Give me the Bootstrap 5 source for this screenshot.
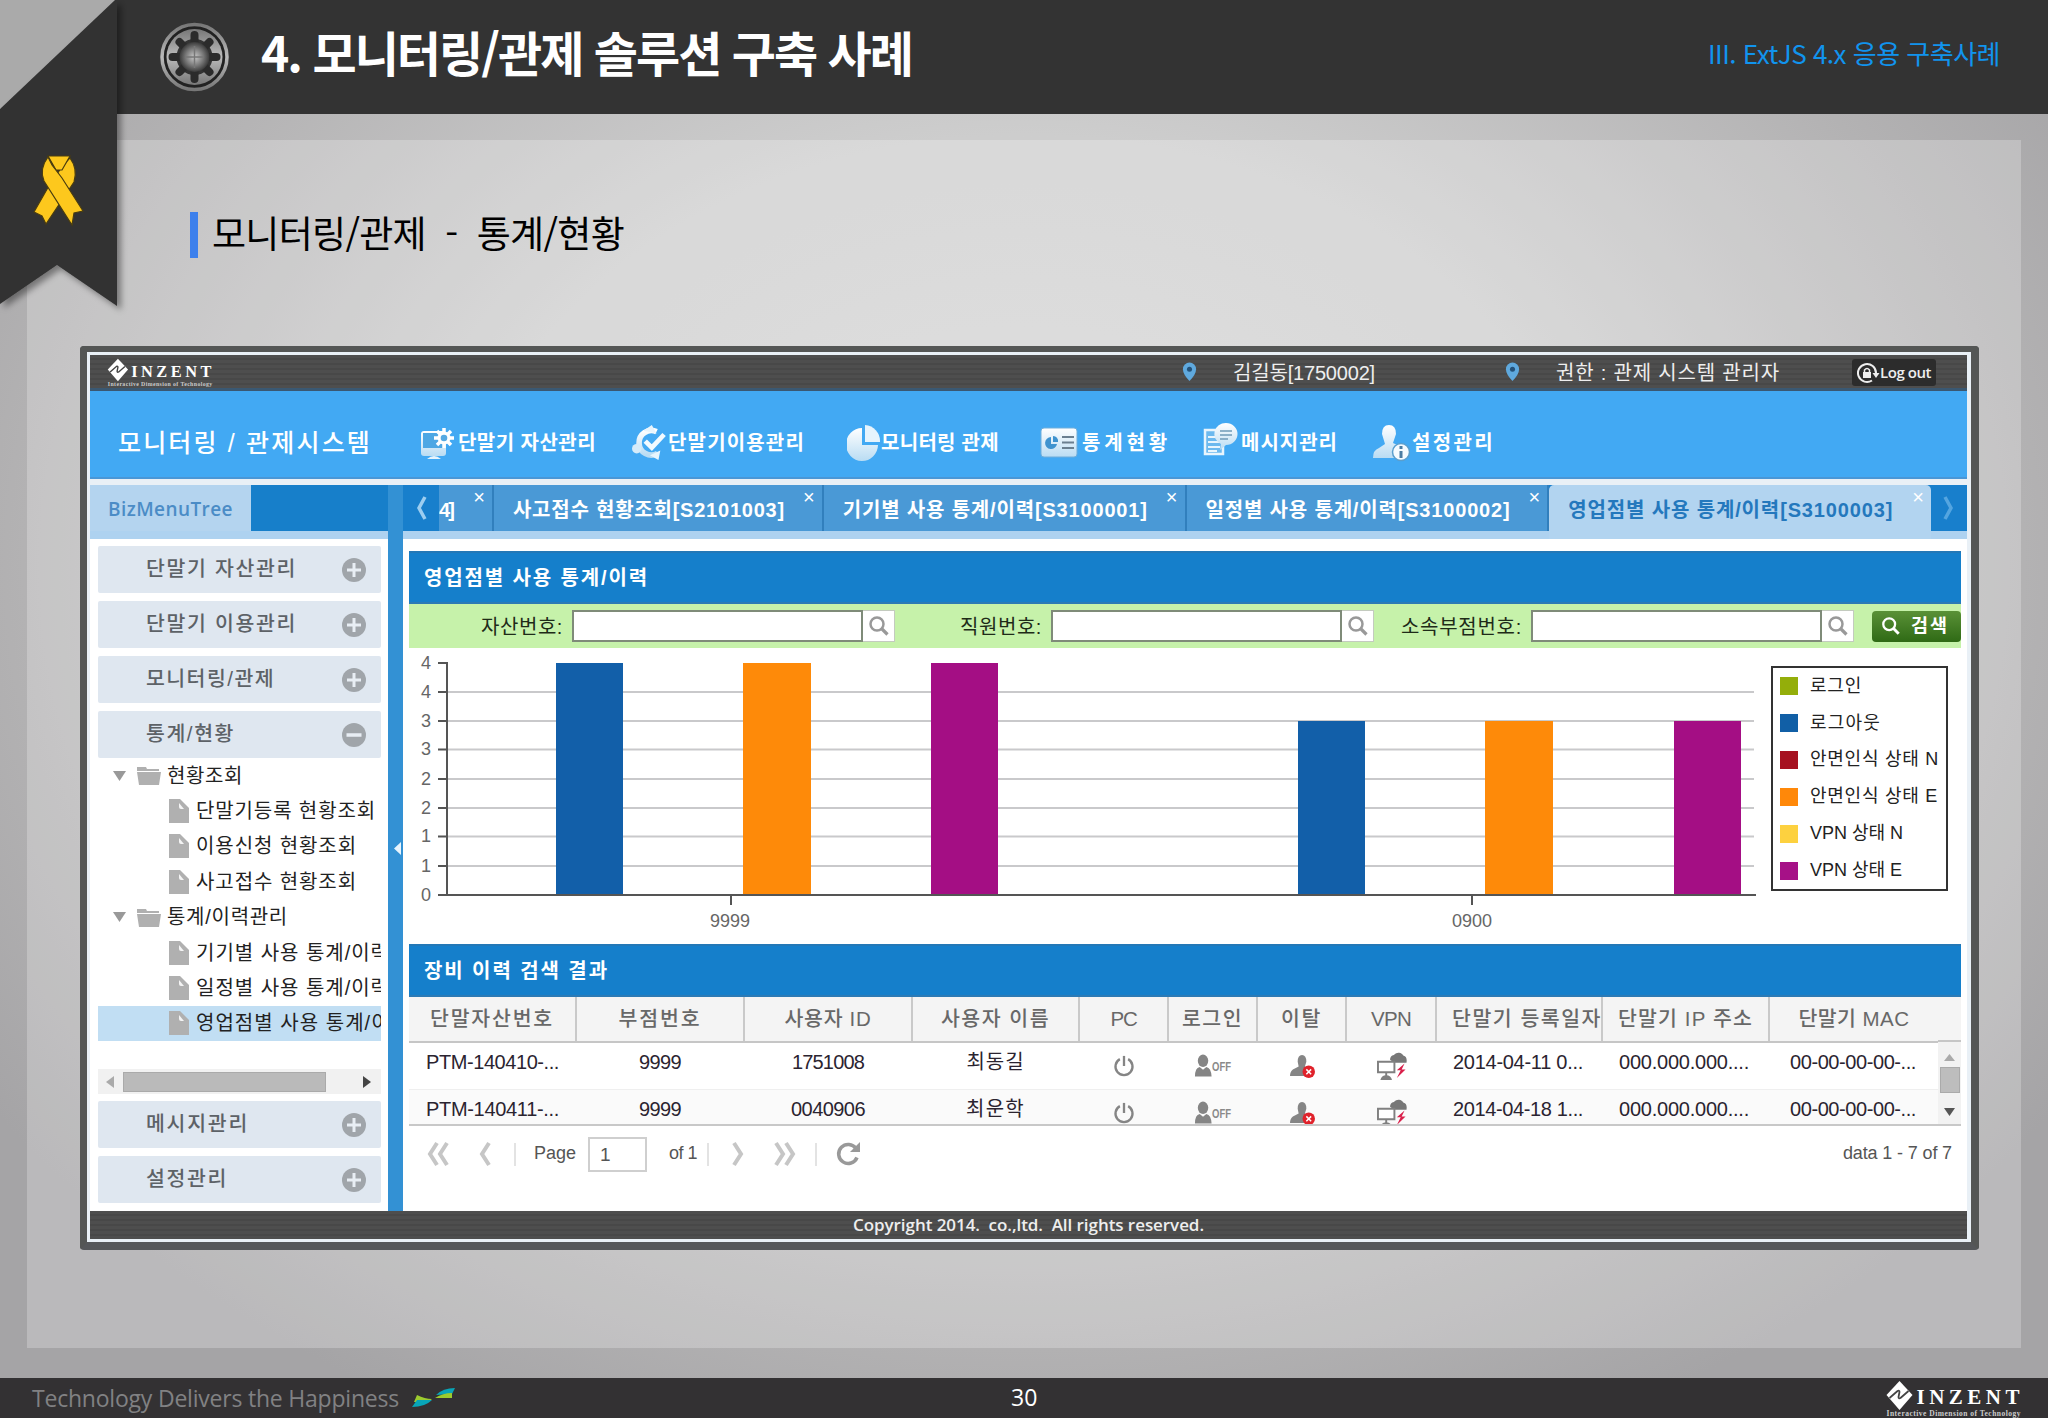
<!DOCTYPE html>
<html lang="ko">
<head>
<meta charset="utf-8">
<title>모니터링/관제 솔루션 구축 사례</title>
<link href="https://cdn.jsdelivr.net/npm/bootstrap@5.3.0/dist/css/bootstrap.min.css" rel="stylesheet">
<script src="https://cdn.jsdelivr.net/npm/bootstrap@5.3.0/dist/js/bootstrap.bundle.min.js"></script>
<style>
  body{width:2048px;height:1418px;overflow:hidden;font-family:"Liberation Sans","Noto Sans CJK KR",sans-serif;font-size:20px;line-height:1.2;color:#222;
    background:radial-gradient(ellipse 1250px 960px at 50% 40%,#d6d6d6 0%,#cdcdcd 45%,#b3b2b3 80%,#a5a4a6 100%)}
  svg{flex:none;display:block}
  [data-w]{white-space:nowrap;display:inline-block;flex:none}
  .slide-head{height:114px;background:#333;padding-left:160px;padding-right:48px}
  .slide-title{font:700 48px/60px "Noto Sans CJK KR",sans-serif;color:#fff;margin:-13px 0 0 32px}
  .slide-section{font:400 26px/40px "Noto Sans CJK KR",sans-serif;color:#1194ee;margin-top:-8px}
  .slide-body{height:1264px;padding:26px 27px 30px}
  .slide-panel{height:1208px;background:rgba(255,255,255,.24);padding:72px 43px 0 53px}
  .slide-sub{height:46px;margin-left:110px;margin-bottom:88px;border-left:8px solid #3d80ec;padding-left:14px;font:400 37px/40px "Noto Sans CJK KR",sans-serif;color:#000}
  .slide-foot{height:40px;background:#333133;color:#818183;padding-left:32px;padding-right:26px;font:23px/40px "Open Sans","Noto Sans",sans-serif}
  .page-no{color:#fff;font-size:23px;left:1011px;top:-1px}
  .wing{margin-left:13px}
  .ribbon{left:0;top:0;z-index:5}
  .brand-name{font:700 21px/22px "Liberation Serif",serif;fill:#fff}
  .app{width:1899px;height:904px;border:solid #545655;border-width:6px 8px 8px 7px;border-bottom-color:#55575a;border-radius:4px;background:#e9f0f6;padding:3px 4px 3px 3px}
  .app-top{height:36px;background:repeating-linear-gradient(#4e4e4e 0 3px,#484848 3px 5px);border-bottom:3px solid #3a5872;color:#eee;padding:3px 0 0 17px}
  .pin-user{margin:-4px 36px 0 969px}
  .pin-role{margin:-4px 36px 0 130px}
  .logout{width:84px;height:27px;background:#2c2c2c;border-radius:3px;padding-left:4px;margin:0 0 1px 72px;font:600 15px/27px "Open Sans",sans-serif}
  .app-nav{height:88px;background:#42a9f3;border-bottom:2px solid #4a97d6;color:#fff;font-weight:700;padding:17px 0 0 28px;font-size:20px}
  .app-nav .sys{font-size:25px;font-weight:500}
  .nav-cell{height:50px}
  .nav-cell span{margin-left:2px}
  .nc-asset{margin-left:47px}.nc-use{margin-left:36px}.nc-mon{margin-left:42px}.nc-stat{margin-left:41px}.nc-msg{margin-left:32px}.nc-set{margin-left:34px}
  .nc-asset span{margin-left:3px}.nc-mon span{margin-left:0}.nc-stat span{margin-left:4px}
  .nc-msg svg{margin-top:-8px}
  .app-main{height:726px;background:#fff;margin-top:6px}
  .side{width:298px}
  .side-head{height:46px;background:#177fca}
  .side-tab{width:161px;height:54px;background:#b4d4ef;color:#4b8cc6;padding-left:18px;font:600 19px/49px "Open Sans",sans-serif}
  .strip{height:8px;background:#aed2f0}
  .menu{padding:7px 7px 0 8px}
  .menu-item{height:47px;margin-bottom:8px;background:#dfe7f0;color:#5d6267;font-weight:500;font-size:20.500px;padding:0 15px 0 48px;border-radius:2px}
  .tree{height:283px}
  .tree-row{height:35.400px;overflow:hidden;padding-left:15px;color:#222}
  .tree-row.leaf{padding-left:71px}
  .tree-row.active{background:#c1def3}
  .tree-row .fold{margin:0 6px 0 11px}
  .tree-row .doc{margin-right:7px}
  .hscroll{height:25px;background:#f1f1f1;margin:28px 0 7px;padding:0 10px 0 8px}
  .hthumb{width:203px;height:20px;background:#bababa;border:1px solid #aaa;margin-left:9px}
  .splitter{width:15px;background:#3391d4}
  .splitter svg{margin-right:1px}
  .work{width:1564px}
  .tabs{height:46px;background:#187fcc;color:#fff}
  .tab-nav{width:36px}
  .app-tab{height:46px;background:#4a99d6;border-right:2px solid #317fbd;padding:4px 0 0 19px;font-weight:600;font-size:20px;overflow:hidden}
  .app-tab.active{height:54px;background:#b2d4f0;color:#2478bd;border-right:0;border-radius:5px 5px 0 0;padding-bottom:8px;padding-left:19px}
  .app-tab.cut{width:55px;padding-left:0}
  .tw-330{width:330px}.tw-363{width:363px}.tw-382{width:382px}
  .tab-x{font:20px/20px "Liberation Sans";margin:-27px 7px 0 auto;color:#fff}
  .pane{margin:12px 6px 0 6px;width:1552px}
  .pane-head{height:53px;background:#157fcb;border-top:2px solid #2378b7;border-bottom:2px solid #2c7ab5;color:#fff;font-weight:600;font-size:20px;padding-left:15px}
  .search{height:44px;background:#c6f2aa}
  .lbl{color:#1e2b18;padding-top:2px}
  .l-asset{margin-left:72px}.l-emp{margin-left:65px}.l-dept{margin-left:27px}
  .fld{height:32px;width:291px;border:2px solid #7f8b79;background:#fff;margin-left:9px}
  .trig{width:32px;height:32px;background:#fff;border:1px solid #c4cbbf;border-left:0;color:#999}
  .btn-find{height:31px;width:89px;border-radius:4px;background:linear-gradient(#5a9137,#2f6a15);color:#fff;font-weight:700;font-size:18.500px;padding:0 12px 0 9px;border:0}
  .chart-box{height:296px}
  .chart-box text{font:18px "Liberation Sans",sans-serif;fill:#666}
  .legend-box{width:177px;height:225px;border:2px solid #333;margin:18px 0 0 10px;padding-left:7px;font-size:18px}
  .legend-row{height:36.900px}
  .swatch{width:18px;height:18px;margin-right:12px}
  .c-in{background:#94ae0a}.c-out{background:#115fa6}.c-fn{background:#a61120}.c-fe{background:#ff8809}.c-vn{background:#fdd13f}.c-ve{background:#a61187}
  .grid{height:127px;width:1529px;overflow:hidden}
  .grid table{table-layout:fixed;width:1529px;margin:0}
  .w-a{width:167px}.w-b{width:168px}.w-i{width:89px}.w-v{width:90px}.w-d{width:166px}.w-m{width:169px}
  .grid th{height:45px;padding:0;text-align:center;vertical-align:middle;font-weight:500;font-size:20.500px;color:#686868;background:#f4f4f4;border-right:2px solid #c9c9c9;border-bottom:2px solid #c6c6c6;overflow:hidden;white-space:nowrap}
  .grid th:last-child{border-right:0}
  .grid th.lead-col{text-align:left;padding-left:15px}
  .grid td{height:47.500px;padding:7px 0 0;text-align:center;vertical-align:top;border:0;border-bottom:1px solid #efefef;white-space:nowrap;color:#2b2430;line-height:24px}
  .grid tr:last-child td{background:#fafafa}
  .grid td.txt{text-align:left;padding-left:17px}
  .grid td.txt.mac{padding-left:21px}
  .grid td.ico{padding-top:11px;padding-left:1px}
  .grid td svg{margin:auto}
  .grid td svg.up{margin-top:-2px}
  .off{font:700 12px "Liberation Sans";fill:#8a8a8a}
  .vs-head{height:45px;width:23px;background:#f4f4f4;border-bottom:2px solid #c6c6c6}
  .vscroll{height:82px;width:23px;background:#f2f2f2}
  .vthumb{width:20px;height:26px;background:#bdbdbd;border:1px solid #aaa;margin-top:5px}
  .grid-wrap{border-bottom:2px solid #c8c8c8}
  .pager{height:58px;padding:0 9px 2px 17px;color:#555;font-size:18px}
  .pager-sep{width:2px;height:23px;background:#e3e3e3}
  .g-10{margin-left:10px}.g-12{margin-left:12px}.g-18{margin-left:18px}.g-22{margin-left:22px}.g-28{margin-left:28px}
  .pg-input{width:59px;height:35px;border:2px solid #cfcfcf;padding:5px 0 0 10px;font-size:19px}
  .app-foot{height:28px;background:repeating-linear-gradient(#4e4e4e 0 3px,#484848 3px 5px);color:#eee;font:600 17px/28px "Open Sans",sans-serif}
</style>
</head>
<body class="position-relative">

<svg width="0" height="0" class="position-absolute">
  <defs>
    <linearGradient id="ice" x1="0" y1="0" x2="0" y2="1"><stop offset="0" stop-color="#fff"/><stop offset="1" stop-color="#b9dcf3"/></linearGradient>
    <linearGradient id="metal" x1="0" y1="0" x2="0" y2="1"><stop offset="0" stop-color="#777"/><stop offset=".5" stop-color="#bbb"/><stop offset="1" stop-color="#777"/></linearGradient>
    <radialGradient id="hub"><stop offset="0" stop-color="#ccc"/><stop offset=".6" stop-color="#777"/><stop offset="1" stop-color="#3a3a3a"/></radialGradient>
    <symbol id="plus" viewBox="0 0 24 24"><circle cx="12" cy="12" r="12" fill="#a0a5aa"/><path d="M12 5v14M5 12h14" stroke="#e8eef4" stroke-width="3"/></symbol>
    <symbol id="minus" viewBox="0 0 24 24"><circle cx="12" cy="12" r="12" fill="#a0a5aa"/><path d="M4.500 12h15" stroke="#e8eef4" stroke-width="3.500"/></symbol>
    <symbol id="down" viewBox="0 0 13 10"><path d="M0 0h13L6.500 10z" fill="#999"/></symbol>
    <symbol id="folder" viewBox="0 0 24 19"><path d="M0 1h9l1 2h12v2H0zM0 6h24l-2 13H2z" fill="#b0b0b0"/></symbol>
    <symbol id="file" viewBox="0 0 20 24"><path d="M0 0h11l9 9v15H0z" fill="#b0b0b0"/><path d="M10 4l5 6h-3q-2 0-2-2z" fill="#f4f4f4"/></symbol>
    <symbol id="mag" viewBox="0 0 22 22"><circle cx="9" cy="9" r="6.500" fill="none" stroke="currentColor" stroke-width="2.500"/><path d="M13.500 13.500l6 6" stroke="currentColor" stroke-width="3.200"/></symbol>
    <symbol id="power" viewBox="0 0 24 24"><path d="M7.500 4.500a9.300 9.300 0 1 0 9 0" fill="none" stroke="#858585" stroke-width="2.500"/><path d="M12 1v11" stroke="#858585" stroke-width="2.500"/></symbol>
    <symbol id="person" viewBox="0 0 20 24"><ellipse cx="9.500" cy="6.500" rx="5.500" ry="6.500" fill="#858585"/><path d="M1 23q0-9 5-10l3.500 3 3.500-3q5 1 5.500 10z" fill="#858585"/></symbol>
    <symbol id="away" viewBox="0 0 28 26"><path d="M9 8q0-7 4.500-7T18 8l-1.500 5q7 2 7 10H1q0-5 3-7l6-3z" fill="#858585"/><circle cx="20.500" cy="18.500" r="6.500" fill="#e0222b"/><path d="M18 16l5 5m0-5l-5 5" stroke="#fff" stroke-width="1.500"/></symbol>
    <symbol id="vpn" viewBox="0 0 32 30"><path d="M14 8a5 5 0 0 1 4-5 6 6 0 0 1 10 1q4 1 3 7H18z" fill="#777"/><path d="M1.500 10h17v11h-17z" fill="#fff" stroke="#808080" stroke-width="2"/><path d="M10 21v4" stroke="#808080" stroke-width="2"/><path d="M4 29q1-5 6-5t6 5z" fill="#808080"/><path d="M29 12l-8 7h4l-4 8 9-9h-4z" fill="#d91f4a"/></symbol>
    <symbol id="pin" viewBox="0 0 16 20"><path d="M8 20Q1 13 1 7.500a7 7 0 0 1 14 0Q15 13 8 20z" fill="#5fa9de"/><circle cx="8" cy="7.500" r="2.700" fill="#24527a"/></symbol>
    <symbol id="inzent" viewBox="0 0 136 38">
      <path d="M14 0l13 14-13 15L1 14z" fill="#fff"/><path d="M4 17l8-7q2-1 2 1l-1 5q0 2 2 1l8-7" fill="none" stroke="#444" stroke-width="1.800"/>
      <text class="brand-name" x="31" y="23" textLength="103" lengthAdjust="spacing">INZENT</text>
      <text x="1" y="34.500" textLength="134" font-family="Liberation Serif" font-weight="700" font-size="7.500" fill="#ccc">Interactive Dimension of Technology</text>
    </symbol>
  </defs>
</svg>

<!-- Corner ribbon lies over the header and the panel -->
<svg class="ribbon position-absolute" width="128" height="318" viewBox="0 0 128 318">
  <defs><filter id="sh" x="-10%" y="-5%" width="130%" height="115%"><feDropShadow dx="4" dy="4" stdDeviation="3" flood-opacity=".4"/></filter></defs>
  <path d="M0 0h117v110H0z" fill="#aaa"/>
  <path d="M115 0h2v306L57 265 0 304V109z" fill="#333" filter="url(#sh)"/>
  <g fill="#fdc81d" stroke="#4a3d10" stroke-width="1.200">
    <path d="M70 158q8 11 4 24L46 224l-4-8-8-4 16-28 14-20z"/>
    <path d="M48 156h22l-8 14h-6z"/>
    <path d="M48 157q-9 12-4 24l28 44 2-12 9-2-21-33-10-13z"/>
  </g>
</svg>

<header class="slide-head d-flex align-items-center">
  <svg width="69" height="70" viewBox="0 0 69 70">
    <circle cx="34.500" cy="35" r="32.500" fill="#222" stroke="url(#metal)" stroke-width="3.500"/>
    <circle cx="34.500" cy="35" r="28" fill="url(#metal)"/>
    <circle cx="34.500" cy="35" r="18" fill="#333"/>
    <g stroke="#2b2b2b" stroke-width="8" stroke-linecap="round"><path d="M34.500 13v44M12.500 35h44M19.500 20l30 30M49.500 20l-30 30"/></g>
    <circle cx="34.500" cy="35" r="15" fill="url(#hub)"/>
    <path d="M34.500 24v22M25 35h19" stroke="#777" stroke-width="1.500"/>
  </svg>
  <span class="slide-title" data-w="651">4. 모니터링/관제 솔루션 구축 사례</span>
  <span class="slide-section ms-auto" data-w="292">III. ExtJS 4.x 응용 구축사례</span>
</header>

<main class="slide-body">
  <div class="slide-panel">
    <h2 class="slide-sub"><span data-w="412">모니터링/관제&nbsp; - &nbsp;통계/현황</span></h2>

    <section class="app">
      <div class="app-top d-flex align-items-center">
        <svg width="106" height="31"><use href="#inzent"/></svg>
        <svg class="pin-user" width="15" height="19"><use href="#pin"/></svg>
        <span data-w="142">김길동[1750002]</span>
        <svg class="pin-role" width="15" height="19"><use href="#pin"/></svg>
        <span data-w="224">권한 : 관제 시스템 관리자</span>
        <div class="logout d-flex align-items-center">
          <svg width="24" height="22" viewBox="0 0 24 22"><path d="M16 18.500A9 9 0 1 1 20 11" fill="none" stroke="#eee" stroke-width="2"/><path d="M16.500 11h7l-3.500 5z" fill="#eee"/><path d="M7 10h8v6H7z" fill="#eee"/><path d="M8.500 10V8q2.500-3 5 0v2" fill="none" stroke="#eee" stroke-width="1.500"/></svg>
          <span data-w="51">Log out</span>
        </div>
      </div>

      <nav class="app-nav d-flex align-items-center">
        <span class="sys" data-w="254">모니터링 / 관제시스템</span>
        <div class="nav-cell nc-asset d-flex align-items-center">
          <svg width="36" height="36" viewBox="0 0 36 36"><rect x="2" y="6" width="25" height="25" rx="3" fill="url(#ice)"/><path d="M4 8h21v15H4z" fill="#4da7e4"/><path d="M8 34q7-6 14 0z" fill="#e6f4fd"/><g stroke="#fff" stroke-width="3.500"><path d="M25 3v20M15 13h20M18 6l14 14M32 6L18 20"/></g><circle cx="25" cy="13" r="6.500" fill="#fff"/><circle cx="25" cy="13" r="3.300" fill="#55a9e2"/></svg>
          <span data-w="138">단말기 자산관리</span>
        </div>
        <div class="nav-cell nc-use d-flex align-items-center">
          <svg width="34" height="38" viewBox="0 0 36 38"><path d="M26 7A13 13 0 1 0 27 30" fill="none" stroke="url(#ice)" stroke-width="6"/><path d="M12 6l9-6 5 9zM30 27l-2 10-9-5z" fill="#e8f5fd"/><circle cx="5" cy="25" r="5" fill="#d5ebf9"/><path d="M14 17l7 7L34 10" fill="none" stroke="#f2faff" stroke-width="5"/></svg>
          <span data-w="137">단말기이용관리</span>
        </div>
        <div class="nav-cell nc-mon d-flex align-items-center">
          <svg width="34" height="38" viewBox="0 0 34 38"><path d="M15 4a16 16.500 0 1 0 16 17H15z" fill="url(#ice)"/><path d="M18 1a16 16 0 0 1 15 17H18z" fill="#e6f4fd"/></svg>
          <span data-w="118">모니터링 관제</span>
        </div>
        <div class="nav-cell nc-stat d-flex align-items-center">
          <svg width="38" height="32" viewBox="0 0 38 32"><rect x="1" y="1" width="36" height="29" rx="3" fill="url(#ice)" stroke="#6faedb"/><path d="M11 10a6 6 0 1 0 6 7h-6z" fill="#3f93cf"/><path d="M13 9v6h5a5 5 0 0 0-5-6z" fill="#3f93cf"/><path d="M22 10h12M22 15.500h12M22 21h12" stroke="#6a7f90" stroke-width="2"/></svg>
          <span data-w="89">통계현황</span>
        </div>
        <div class="nav-cell nc-msg d-flex align-items-center">
          <svg width="36" height="38" viewBox="0 0 36 38"><path d="M2 10h18v24H2z" fill="#6cb9ee" stroke="#e8f5fd" stroke-width="2.500"/><path d="M5 17h9M5 22h12M5 27h12M5 31h9" stroke="#e8f5fd" stroke-width="2"/><path d="M23 3a11.500 11 0 0 1 0 22l-6 5 1-6A11.500 11 0 0 1 23 3z" fill="url(#ice)"/><path d="M17 11h12M17 15h12M17 19h8" stroke="#6f9ab8" stroke-width="1.500"/></svg>
          <span data-w="97">메시지관리</span>
        </div>
        <div class="nav-cell nc-set d-flex align-items-center">
          <svg width="38" height="38" viewBox="0 0 38 38"><path d="M10 10q0-9 7-9t7 9l-3 9q10 3 10 15H1q0-8 6-10l6-4z" fill="url(#ice)"/><circle cx="29" cy="28" r="8.500" fill="#f5fbff" stroke="#5a9fce" stroke-width="1.500"/><path d="M29 22v3M29 27v7" stroke="#4b7da3" stroke-width="3"/></svg>
          <span data-w="83">설정관리</span>
        </div>
      </nav>

      <div class="app-main d-flex">
        <aside class="side">
          <div class="side-head"><div class="side-tab"><span data-w="125">BizMenuTree</span></div></div>
          <div class="strip"></div>
          <div class="menu">
            <div class="menu-item d-flex align-items-center justify-content-between"><span data-w="151">단말기 자산관리</span><svg width="24" height="24"><use href="#plus"/></svg></div>
            <div class="menu-item d-flex align-items-center justify-content-between"><span data-w="151">단말기 이용관리</span><svg width="24" height="24"><use href="#plus"/></svg></div>
            <div class="menu-item d-flex align-items-center justify-content-between"><span data-w="129">모니터링/관제</span><svg width="24" height="24"><use href="#plus"/></svg></div>
            <div class="menu-item d-flex align-items-center justify-content-between mb-0"><span data-w="89">통계/현황</span><svg width="24" height="24"><use href="#minus"/></svg></div>
            <div class="tree">
              <div class="tree-row d-flex align-items-center"><svg width="13" height="10"><use href="#down"/></svg><svg class="fold" width="24" height="19"><use href="#folder"/></svg><span data-w="76">현황조회</span></div>
              <div class="tree-row leaf d-flex align-items-center"><svg width="20" height="24" class="doc"><use href="#file"/></svg><span data-w="180">단말기등록 현황조회</span></div>
              <div class="tree-row leaf d-flex align-items-center"><svg width="20" height="24" class="doc"><use href="#file"/></svg><span data-w="161">이용신청 현황조회</span></div>
              <div class="tree-row leaf d-flex align-items-center"><svg width="20" height="24" class="doc"><use href="#file"/></svg><span data-w="161">사고접수 현황조회</span></div>
              <div class="tree-row d-flex align-items-center"><svg width="13" height="10"><use href="#down"/></svg><svg class="fold" width="24" height="19"><use href="#folder"/></svg><span data-w="121">통계/이력관리</span></div>
              <div class="tree-row leaf d-flex align-items-center"><svg width="20" height="24" class="doc"><use href="#file"/></svg><span data-w="194">기기별 사용 통계/이력</span></div>
              <div class="tree-row leaf d-flex align-items-center"><svg width="20" height="24" class="doc"><use href="#file"/></svg><span data-w="194">일정별 사용 통계/이력</span></div>
              <div class="tree-row leaf active d-flex align-items-center"><svg width="20" height="24" class="doc"><use href="#file"/></svg><span data-w="214">영업점별 사용 통계/이력</span></div>
            </div>
            <div class="hscroll d-flex align-items-center">
              <svg width="8" height="12"><path d="M8 0v12L0 6z" fill="#aaa"/></svg>
              <div class="hthumb"></div>
              <svg width="8" height="12" class="ms-auto"><path d="M0 0v12l8-6z" fill="#444"/></svg>
            </div>
            <div class="menu-item d-flex align-items-center justify-content-between"><span data-w="103">메시지관리</span><svg width="24" height="24"><use href="#plus"/></svg></div>
            <div class="menu-item d-flex align-items-center justify-content-between"><span data-w="82">설정관리</span><svg width="24" height="24"><use href="#plus"/></svg></div>
          </div>
        </aside>

        <div class="splitter d-flex align-items-center justify-content-end"><svg width="9" height="13"><path d="M8 0v13L1 6.500z" fill="#e8f4fd"/></svg></div>

        <div class="work">
          <div class="tabs d-flex align-items-start">
            <div class="tab-nav d-flex align-items-center justify-content-center h-100"><svg width="12" height="28"><path d="M10 3L4 14l6 11" fill="none" stroke="#9ccdf0" stroke-width="3.500"/></svg></div>
            <div class="app-tab cut d-flex align-items-center"><span data-w="14">4]</span><span class="tab-x">×</span></div>
            <div class="app-tab tw-330 d-flex align-items-center"><span data-w="272">사고접수 현황조회[S2101003]</span><span class="tab-x">×</span></div>
            <div class="app-tab tw-363 d-flex align-items-center"><span data-w="305">기기별 사용 통계/이력[S3100001]</span><span class="tab-x">×</span></div>
            <div class="app-tab tw-363 d-flex align-items-center"><span data-w="305">일정별 사용 통계/이력[S3100002]</span><span class="tab-x">×</span></div>
            <div class="app-tab tw-382 active d-flex align-items-center"><span data-w="325">영업점별 사용 통계/이력[S3100003]</span><span class="tab-x">×</span></div>
            <div class="tab-nav d-flex align-items-center justify-content-center h-100"><svg width="12" height="28"><path d="M2 3l6 11-6 11" fill="none" stroke="#54a5e0" stroke-width="3.500"/></svg></div>
          </div>
          <div class="strip"></div>

          <div class="pane">
            <div class="pane-head d-flex align-items-center"><span data-w="225">영업점별 사용 통계/이력</span></div>
            <form class="search d-flex align-items-center">
              <span class="lbl l-asset" data-w="82">자산번호:</span><div class="fld"></div><div class="trig d-flex align-items-center justify-content-center"><svg width="22" height="22"><use href="#mag"/></svg></div>
              <span class="lbl l-emp" data-w="82">직원번호:</span><div class="fld"></div><div class="trig d-flex align-items-center justify-content-center"><svg width="22" height="22"><use href="#mag"/></svg></div>
              <span class="lbl l-dept" data-w="121">소속부점번호:</span><div class="fld"></div><div class="trig d-flex align-items-center justify-content-center"><svg width="22" height="22"><use href="#mag"/></svg></div>
              <button type="button" class="btn-find d-flex align-items-center justify-content-between ms-auto"><svg width="20" height="20"><use href="#mag"/></svg><span data-w="38">검색</span></button>
            </form>

            <div class="chart-box d-flex align-items-start">
              <svg width="1352" height="296" viewBox="409 648 1352 296">
                <path d="M447 692h1307M447 721h1307M447 749.500h1307M447 779h1307M447 808h1307M447 836.500h1307M447 866h1307" stroke="#c9c9cb" stroke-width="2"/>
                <g fill="#125fa9"><path d="M556 663h67v232h-67zM1298 721h67v174h-67z"/></g>
                <g fill="#fe8a09"><path d="M743 663h68v232h-68zM1485 721h68v174h-68z"/></g>
                <g fill="#a40e84"><path d="M931 663h67v232h-67zM1674 721h67v174h-67z"/></g>
                <path d="M447 662v234M438 663h9M438 692h9M438 721h9M438 749.500h9M438 779h9M438 808h9M438 836.500h9M438 866h9M438 895h1318M731 895v10M1472 895v10" fill="none" stroke="#555" stroke-width="2"/>
                <g text-anchor="end"><text x="431" y="669">4</text><text x="431" y="698">4</text><text x="431" y="727">3</text><text x="431" y="755">3</text><text x="431" y="785">2</text><text x="431" y="814">2</text><text x="431" y="842">1</text><text x="431" y="872">1</text><text x="431" y="901">0</text></g>
                <g text-anchor="middle"><text x="730" y="927">9999</text><text x="1472" y="927">0900</text></g>
              </svg>
              <div class="legend-box">
                <div class="legend-row d-flex align-items-center"><i class="swatch c-in"></i><span data-w="52">로그인</span></div>
                <div class="legend-row d-flex align-items-center"><i class="swatch c-out"></i><span data-w="71">로그아웃</span></div>
                <div class="legend-row d-flex align-items-center"><i class="swatch c-fn"></i><span data-w="129">안면인식 상태 N</span></div>
                <div class="legend-row d-flex align-items-center"><i class="swatch c-fe"></i><span data-w="128">안면인식 상태 E</span></div>
                <div class="legend-row d-flex align-items-center"><i class="swatch c-vn"></i><span data-w="93">VPN 상태 N</span></div>
                <div class="legend-row d-flex align-items-center"><i class="swatch c-ve"></i><span data-w="92">VPN 상태 E</span></div>
              </div>
            </div>

            <div class="pane-head d-flex align-items-center"><span data-w="185">장비 이력 검색 결과</span></div>
            <div class="grid-wrap d-flex">
              <div class="grid">
                <table class="table">
                  <colgroup><col class="w-a"><col class="w-b"><col class="w-b"><col class="w-a"><col class="w-i"><col class="w-i"><col class="w-i"><col class="w-v"><col class="w-d"><col class="w-a"><col class="w-m"></colgroup>
                  <thead><tr><th><span data-w="124">단말자산번호</span></th><th><span data-w="83">부점번호</span></th><th><span data-w="87">사용자 ID</span></th><th><span data-w="109">사용자 이름</span></th><th><span data-w="26">PC</span></th><th><span data-w="61">로그인</span></th><th><span data-w="41">이탈</span></th><th><span data-w="40">VPN</span></th><th class="lead-col"><span data-w="150">단말기 등록일자</span></th><th><span data-w="135">단말기 IP 주소</span></th><th><span data-w="111">단말기 MAC</span></th></tr></thead>
                  <tbody>
                    <tr><td class="txt"><span data-w="133">PTM-140410-...</span></td><td><span data-w="42">9999</span></td><td><span data-w="72">1751008</span></td><td><span data-w="58">최동길</span></td>
                      <td class="ico"><svg width="22" height="24"><use href="#power"/></svg></td>
                      <td class="ico"><svg width="38" height="25" viewBox="0 0 38 25"><use href="#person" width="19" height="24"/><text class="off" x="18" y="17" textLength="19" lengthAdjust="spacingAndGlyphs">OFF</text></svg></td>
                      <td class="ico"><svg width="27" height="25"><use href="#away"/></svg></td>
                      <td class="ico"><svg class="up" width="32" height="29"><use href="#vpn"/></svg></td>
                      <td class="txt"><span data-w="130">2014-04-11 0...</span></td><td class="txt"><span data-w="130">000.000.000....</span></td><td class="txt mac"><span data-w="126">00-00-00-00-...</span></td></tr>
                    <tr><td class="txt"><span data-w="133">PTM-140411-...</span></td><td><span data-w="42">9999</span></td><td><span data-w="74">0040906</span></td><td><span data-w="59">최운학</span></td>
                      <td class="ico"><svg width="22" height="24"><use href="#power"/></svg></td>
                      <td class="ico"><svg width="38" height="25" viewBox="0 0 38 25"><use href="#person" width="19" height="24"/><text class="off" x="18" y="17" textLength="19" lengthAdjust="spacingAndGlyphs">OFF</text></svg></td>
                      <td class="ico"><svg width="27" height="25"><use href="#away"/></svg></td>
                      <td class="ico"><svg class="up" width="32" height="29"><use href="#vpn"/></svg></td>
                      <td class="txt"><span data-w="130">2014-04-18 1...</span></td><td class="txt"><span data-w="130">000.000.000....</span></td><td class="txt mac"><span data-w="126">00-00-00-00-...</span></td></tr>
                  </tbody>
                </table>
              </div>
              <div>
                <div class="vs-head"></div>
                <div class="vscroll d-flex flex-column align-items-center pt-2">
                  <svg width="11" height="8" class="mt-1"><path d="M0 7h11L5.500 0z" fill="#aaa"/></svg>
                  <div class="vthumb"></div>
                  <svg width="11" height="8" class="mt-auto mb-2"><path d="M0 0h11L5.500 8z" fill="#555"/></svg>
                </div>
              </div>
            </div>
            <div class="pager d-flex align-items-center">
              <svg width="24" height="26"><path d="M11 2L4 13l7 11M21 2l-7 11 7 11" fill="none" stroke="#c6c6c6" stroke-width="4"/></svg>
              <svg class="g-28" width="14" height="26"><path d="M11 2L4 13l7 11" fill="none" stroke="#c6c6c6" stroke-width="4"/></svg>
              <div class="pager-sep g-22"></div>
              <span class="g-18" data-w="42">Page</span>
              <div class="pg-input g-12">1</div>
              <span class="g-22" data-w="28">of 1</span>
              <div class="pager-sep g-10"></div>
              <svg class="g-22" width="14" height="26"><path d="M3 2l7 11-7 11" fill="none" stroke="#c6c6c6" stroke-width="4"/></svg>
              <svg class="g-28" width="24" height="26"><path d="M3 2l7 11-7 11M13 2l7 11-7 11" fill="none" stroke="#c6c6c6" stroke-width="4"/></svg>
              <div class="pager-sep g-18"></div>
              <svg class="g-18" width="26" height="26"><path d="M21 7.500a9.500 9.500 0 1 0 1 9" fill="none" stroke="#999" stroke-width="3.500"/><path d="M25 1v10H15z" fill="#999"/></svg>
              <span class="ms-auto" data-w="109">data 1 - 7 of 7</span>
            </div>
          </div>
        </div>
      </div>

      <div class="app-foot text-center"><span data-w="351">Copyright 2014.&nbsp; co.,ltd.&nbsp; All rights reserved.</span></div>
    </section>
  </div>
</main>

<footer class="slide-foot position-relative d-flex align-items-center">
  <span data-w="367">Technology Delivers the Happiness</span>
  <svg class="wing" width="43" height="20" viewBox="0 0 43 20"><path d="M5 7q8 4 15 4l-4 3H2z" fill="#9ccb2f"/><path d="M0 19l5-7h15q-7 7-20 7z" fill="#08a5b8"/><path d="M24 7Q31 0 43 0l-3 6z" fill="#08a5b8"/><path d="M23 10q8-5 17-5v5z" fill="#9ccb2f"/></svg>
  <span class="page-no position-absolute">30</span>
  <svg class="ms-auto mt-1" width="137" height="38"><use href="#inzent"/></svg>
</footer>

<script>
  document.querySelectorAll('[data-w]').forEach(function (el) {
    var extra = (+el.dataset.w - el.getBoundingClientRect().width) / el.textContent.length;
    el.style.letterSpacing = extra.toFixed(3) + 'px';
  });
</script>
</body>
</html>
